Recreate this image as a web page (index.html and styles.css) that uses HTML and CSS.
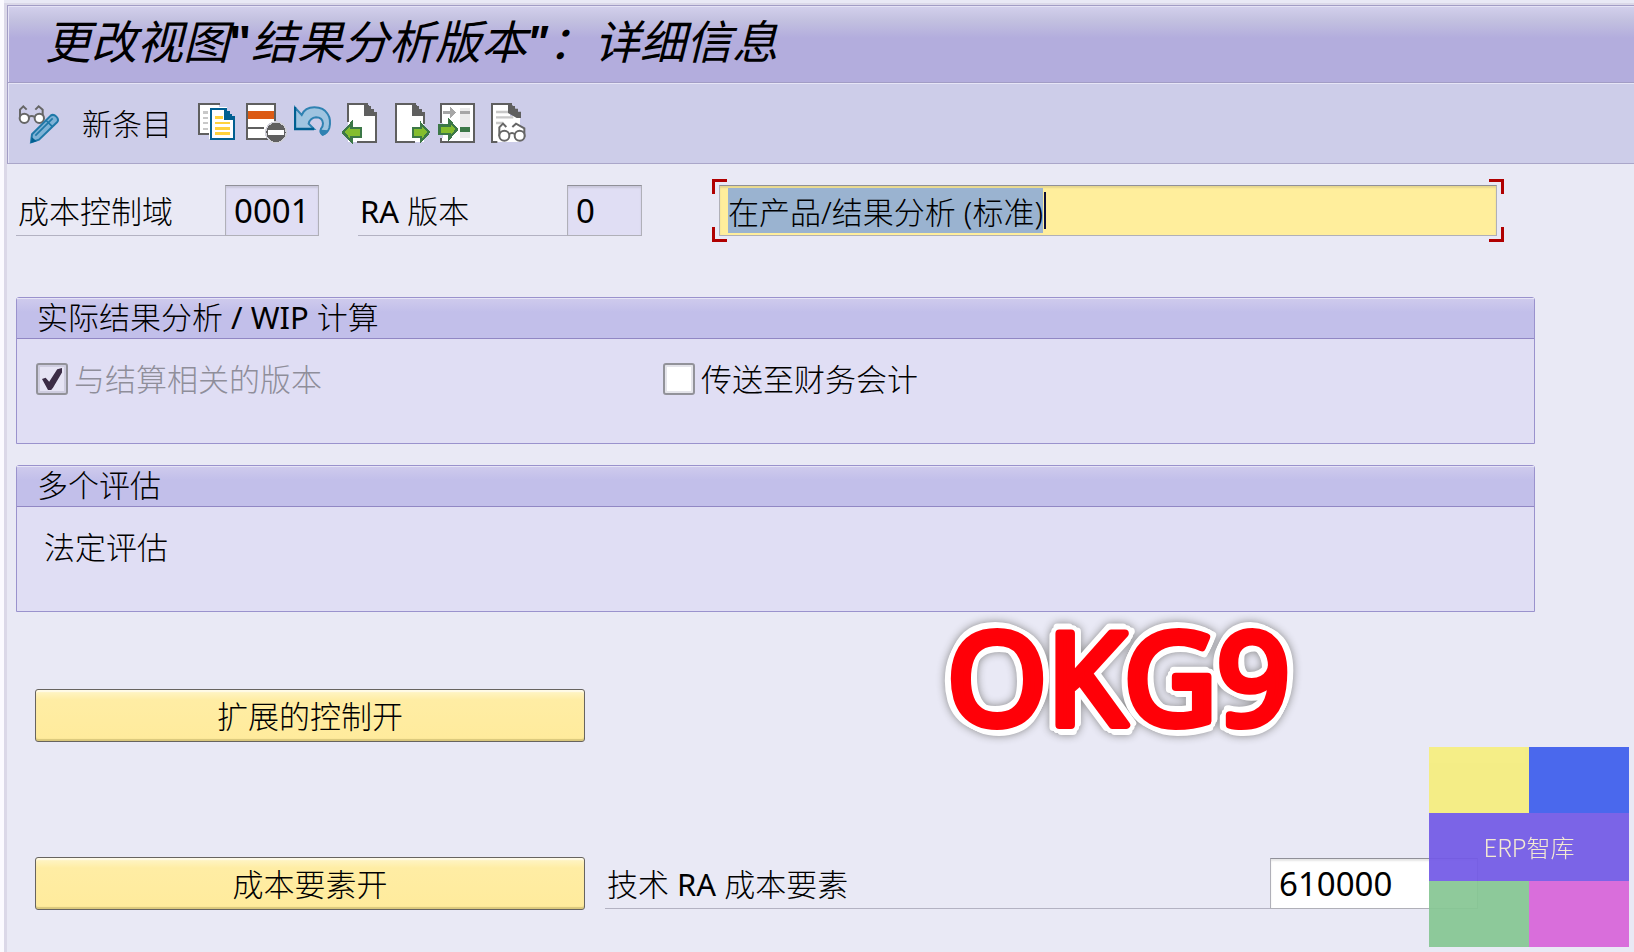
FILE: index.html
```html
<!DOCTYPE html>
<html lang="zh-CN">
<head>
    <meta charset="UTF-8">
    <meta name="viewport" content="width=device-width, initial-scale=1.0">
    <title>更改视图"结果分析版本"：详细信息</title>
    <link rel="stylesheet" href="styles.css">
</head>
<body>
    <div class="window">
        <header class="title-bar">
            <h1>更改视图<b class="open-quote">"</b>结果分析版本<b>"</b>：详细信息</h1>
        </header>

        <div class="toolbar">
            <button class="tool" aria-label="显示/更改">
                <svg viewBox="0 0 126 126">
                    <g fill="#fff" stroke="#666" stroke-width="6">
                        <path d="M6 40V20l10-10 10 10M52 20l10-10 12 10v20" fill="none"/>
                        <circle cx="19" cy="46" r="14"/>
                        <circle cx="64" cy="46" r="14"/>
                        <path d="M32 42q9-6 18 0" fill="none"/>
                    </g>
                    <path d="M39 118l3-24 56-56q8-6 17 3t2 17l-54 52z" fill="#7fb2d6" stroke="#1f78a8" stroke-width="6"/>
                    <path d="M52 98l52-52M83 51l20 20" fill="none" stroke="#1f78a8" stroke-width="5"/>
                    <path d="M39 120l2-18 15 13z" fill="#005f91"/>
                </svg>
            </button>
            <button class="tool-text">新条目</button>
            <button class="tool" aria-label="复制为">
                <svg viewBox="0 0 126 126" shape-rendering="crispEdges">
                    <path d="M3 3h60v89H3z" fill="#fff"/>
                    <path d="M66 3H3v90h33" fill="none" stroke="#5f5f5f" stroke-width="6"/>
                    <path d="M15 28h15M15 45h15M15 60h15M15 78h15" stroke="#c8c8c8" stroke-width="7"/>
                    <path d="M33 12h54v96H33z" fill="#fff"/>
                    <path d="M39 18h42v30h27v60H39z" fill="#fff" stroke="#005f91" stroke-width="6"/>
                    <path d="M78 15h9v9h8v8h8v8h8v11H78z" fill="#005f91"/>
                    <path d="M51 43h24M51 60h45M51 77h45M51 92h45" stroke="#ffd23c" stroke-width="8"/>
                </svg>
            </button>
            <button class="tool" aria-label="删除">
                <svg viewBox="0 0 126 126" shape-rendering="crispEdges">
                    <path d="M3 3h84v105H3z" fill="#fff" stroke="#5f5f5f" stroke-width="6"/>
                    <path d="M6 24h78v24H6z" fill="#dc5a14"/>
                    <path d="M6 75h48" stroke="#5f5f5f" stroke-width="7"/>
                    <circle cx="90" cy="88" r="33" fill="#cfcfd8"/>
                    <circle cx="90" cy="88" r="29" fill="#5f5f5f"/>
                    <path d="M67 81h46v14H67z" fill="#fff"/>
                </svg>
            </button>
            <button class="tool" aria-label="撤销">
                <svg viewBox="0 0 126 126">
                    <path d="M3 14v64h57L44 62q4-17 22-19 19 0 21 18 0 10-6 16-5 12 5 18 14-3 20-20 6-26-5-42-12-20-40-20-28 0-38 23z" fill="#9fc4e0" stroke="#2f82b2" stroke-width="6"/>
                    <path d="M3 12v66h57" fill="none" stroke="#005f91" stroke-width="7"/>
                    <path d="M81 80q-5 14 5 18 12-4 17-16z" fill="#2f82b2"/>
                </svg>
            </button>
            <button class="tool" aria-label="上一条目">
                <svg viewBox="0 0 126 126" shape-rendering="crispEdges">
                    <path d="M18 3h54v36h30v78H18z" fill="#fff"/>
                    <path d="M18 57V3h54l30 36v78H45" fill="none" stroke="#5f5f5f" stroke-width="6"/>
                    <path d="M66 0h12v9h9v8h9v9h9v13H66z" fill="#5f5f5f"/>
                    <path d="M3 88l25-27v14h29v26H28v14z" fill="#84bd2f" stroke="#3c7847" stroke-width="7"/>
                </svg>
            </button>
            <button class="tool" aria-label="下一条目">
                <svg viewBox="0 0 126 126" shape-rendering="crispEdges">
                    <path d="M18 3h54v36h30v78H18z" fill="#fff"/>
                    <path d="M75 117H18V3h54l30 36v24" fill="none" stroke="#5f5f5f" stroke-width="6"/>
                    <path d="M66 0h12v9h9v8h9v9h9v13H66z" fill="#5f5f5f"/>
                    <path d="M117 88L92 61v14H69v26h23v14z" fill="#84bd2f" stroke="#3c7847" stroke-width="7"/>
                </svg>
            </button>
            <button class="tool" aria-label="其他条目">
                <svg viewBox="0 0 126 126" shape-rendering="crispEdges">
                    <path d="M9 3h99v114H9z" fill="#fff" stroke="#5f5f5f" stroke-width="6"/>
                    <path d="M66 15h30v90H66z" fill="#ebebeb"/>
                    <path d="M15 23h21V11l18 17-18 18V33H15zM66 23h30v9H66z" fill="#a6a6a6"/>
                    <path d="M66 72h30v15H66z" fill="#3c7847"/>
                    <path d="M0 60h14v44H0z" fill="#cdcde9"/>
                    <path d="M57 79L34 53v14H4v25h30v14z" fill="#84bd2f" stroke="#3c7847" stroke-width="7"/>
                </svg>
            </button>
            <button class="tool" aria-label="打印字段内容">
                <svg viewBox="0 0 126 126">
                    <path d="M18 3h54v36h30v78H18z" fill="#fff"/>
                    <path d="M34 117H18V3h54l30 36" fill="none" stroke="#5f5f5f" stroke-width="6"/>
                    <path d="M66 0h12v9h9v8h9v9h9v19H92L66 30z" fill="#5f5f5f"/>
                    <path d="M30 27h36M30 43h52M30 60h22" stroke="#c8c8c8" stroke-width="7"/>
                    <g fill="#fff" stroke="#666" stroke-width="6">
                        <path d="M40 100V73l11-11 10 10M79 72l11-10 25 14v26"/>
                        <circle cx="55" cy="98" r="15"/>
                        <circle cx="101" cy="98" r="15"/>
                        <path d="M69 94q9-8 18 0" fill="none"/>
                    </g>
                </svg>
            </button>
        </div>

        <main class="content">
            <div class="key-row">
                <label class="field-label key-label" for="area">成本控制域</label>
                <input class="field area" id="area" value="0001" readonly>
                <label class="field-label key-label version-label" for="version"><span class="latin">RA </span>版本</label>
                <input class="field version" id="version" value="0" readonly>
                <div class="focus-frame">
                    <input class="field description" id="description" aria-label="描述" value="在产品/结果分析 (标准)">
                    <span class="caret"></span>
                    <span class="corner top left"></span>
                    <span class="corner top right"></span>
                    <span class="corner bottom left"></span>
                    <span class="corner bottom right"></span>
                </div>
            </div>

            <section class="group">
                <h2>实际结果分析<span class="latin"> / WIP </span>计算</h2>
                <div class="group-body checks">
                    <label class="check disabled"><input type="checkbox" checked disabled>与结算相关的版本</label>
                    <label class="check"><input type="checkbox">传送至财务会计</label>
                </div>
            </section>

            <section class="group">
                <h2>多个评估</h2>
                <div class="group-body">
                    <p>法定评估</p>
                </div>
            </section>

            <div class="actions">
                <button class="push">扩展的控制开</button>
                <div class="action-row">
                    <button class="push">成本要素开</button>
                    <label class="field-label" for="element">技术<span class="latin"> RA </span>成本要素</label>
                    <input class="field element" id="element" value="610000">
                </div>
            </div>
        </main>
    </div>

    <svg class="stamp" width="380" height="220">
        <text x="17" y="157">OKG9</text>
    </svg>

    <div class="watermark">
        <span class="yellow"></span>
        <span class="blue"></span>
        <span class="name">ERP智库</span>
        <span class="green"></span>
        <span class="pink"></span>
    </div>

    <script>
        // Start with the description selected
        const description = document.getElementById('description');
        description.focus();
        description.select();
    </script>
</body>
</html>
```
FILE: styles.css
```css
* {
    box-sizing: border-box;
}
body {
    position: relative;
    margin: 0;
    min-height: 100vh;
    padding: 3px 0 0 4px;
    overflow: hidden;
    background: linear-gradient(to right, #fbfaff 4px, #e9e9f5 4px);
    font-family: "Noto Sans", "Noto Sans CJK SC", sans-serif;
    font-size: 31px;
    font-weight: 300;
    line-height: 38px;
    color: #000;
}
h1, h2, p {
    margin: 0;
    font-weight: inherit;
}
button, input {
    font: inherit;
    color: inherit;
}
.latin {
    font-weight: 400;
}
.window {
    min-height: calc(100vh - 3px);
    border-top: 2px solid #dbd8e8;
    border-left: 3px solid #dbd8e8;
}

/* Title and toolbar */
.title-bar {
    height: 78px;
    padding: 5px 37px;
    border: 1px solid #a29dc5;
    border-right: none;
    box-shadow: inset 1px 1px 0 #e6e3f6;
    background: linear-gradient(#d3d0ec, #c3c1e0 14px, #b3addd 32px);
}
.title-bar h1 {
    font-size: 46px;
    font-weight: 400;
    line-height: 60px;
    font-style: italic;
    white-space: nowrap;
}
.open-quote {
    font-style: normal;
}
.toolbar {
    display: flex;
    align-items: center;
    gap: 6px;
    height: 81px;
    padding: 2px 10px 0;
    border-left: 1px solid #a29dc5;
    border-bottom: 1px solid #aaa6c9;
    box-shadow: inset 1px 1px 0 #e6e5f6;
    background: #cdcde9;
}
.tool, .tool-text {
    padding: 0;
    border: none;
    background: none;
}
.tool svg {
    display: block;
    width: 42px;
    height: 42px;
}
.tool-text {
    margin: 0 20px 0 16px;
    font-size: 30px;
}

/* Fields */
.content {
    padding: 21px 99px 20px 9px;
}
.key-row, .action-row {
    display: flex;
}
.field-label {
    height: 51px;
    padding: 7px 2px 0;
    border-bottom: 1px solid #b3b2c2;
}
.key-label {
    width: 209px;
}
.version-label {
    margin-left: 39px;
}
.field {
    height: 51px;
    padding: 0 8px;
    border: 1px solid #b0b0b8;
    border-top-color: #909098;
    border-radius: 0;
    outline: none;
    box-shadow: inset 0 2px 2px rgba(0, 0, 0, 0.1);
    background: #fff;
    font-size: 33px;
    font-weight: 400;
}
.area, .version {
    background: #e0def4;
}
.area {
    width: 94px;
}
.version {
    width: 75px;
}
.focus-frame {
    position: relative;
    flex: 1;
    margin: 0 38px 0 77px;
}
.description {
    display: block;
    width: 100%;
    background: #ffee9c;
    font-size: 31px;
    font-weight: 300;
}
.description::selection {
    background: #9ab3d0;
    color: #000;
}
.caret {
    position: absolute;
    top: 7px;
    left: 325px;
    width: 2px;
    height: 37px;
    background: #101038;
}
.corner {
    position: absolute;
    width: 15px;
    height: 15px;
    border: 0 solid #b00000;
}
.corner.top {
    top: -6px;
    border-top-width: 3px;
}
.corner.bottom {
    bottom: -6px;
    border-bottom-width: 3px;
}
.corner.left {
    left: -7px;
    border-left-width: 3px;
}
.corner.right {
    right: -7px;
    border-right-width: 3px;
}

/* Groups */
.group {
    height: 147px;
    margin-top: 21px;
    border: 1px solid #9a92cd;
    border-radius: 3px 3px 0 0;
    background: #e0def4;
}
.key-row + .group {
    margin-top: 61px;
}
.group h2 {
    height: 41px;
    padding-left: 20px;
    border-bottom: 1px solid #9187c4;
    box-shadow: inset 0 1px 0 #e6e4f6;
    background: linear-gradient(#cfcbed, #c2bfea 14px);
    font-size: 31px;
    line-height: 38px;
}
.group-body {
    padding: 21px 19px;
}
.group-body p {
    padding-left: 8px;
}
.checks {
    display: grid;
    grid-template-columns: 627px 1fr;
}
.check {
    display: flex;
    align-items: center;
    gap: 6px;
}
.check.disabled {
    color: #8f8e9a;
}
.check input {
    appearance: none;
    width: 32px;
    height: 32px;
    margin: 0;
    border: 2px solid #929299;
    border-radius: 3px;
    box-shadow: inset 0 0 0 2px #e4e4ea;
    background: #fff;
}
.check input:disabled {
    box-shadow: inset 0 0 0 2px #cfcde0;
    background: #e6e4f4;
}
.check input:checked::before {
    content: "";
    display: block;
    width: 20px;
    height: 22px;
    margin: 3px 4px;
    background: #3c2d46;
    clip-path: polygon(0 50%, 18% 44%, 36% 62%, 76% 6%, 100% 0, 100% 20%, 55% 90%, 46% 100%, 30% 100%);
}

/* Push buttons */
.actions {
    padding: 77px 57px 0 19px;
}
.push {
    display: block;
    width: 550px;
    height: 53px;
    padding: 0;
    border: 1px solid #67645f;
    border-radius: 3px;
    box-shadow: inset 0 -2px 1px #d9c77c, inset 0 2px 1px #fffbe8;
    background: linear-gradient(#fff6cb, #ffeda4 10px, #ffeb9c);
}
.action-row {
    margin-top: 115px;
}
.action-row .push {
    margin-right: 20px;
}
.action-row .field-label {
    flex: 1;
    margin-top: 1px;
}
.element {
    width: 208px;
    margin-top: 1px;
}

/* Overlays */
.stamp {
    position: absolute;
    top: 568px;
    left: 930px;
    filter: drop-shadow(4px 2px #fff) drop-shadow(-4px -2px #fff) drop-shadow(2px -4px #fff) drop-shadow(-2px 4px #fff) drop-shadow(0 0 4px #888);
}
.stamp text {
    font-size: 128px;
    font-weight: 400;
    fill: #ff0008;
    stroke: #ff0008;
    stroke-width: 8px;
    stroke-linejoin: round;
}
.watermark {
    position: absolute;
    right: 5px;
    bottom: 5px;
    display: grid;
    grid-template: 66px 68px 66px / 100px 100px;
    opacity: 0.93;
}
.yellow {
    background: #f5ee7e;
}
.blue {
    background: #3e5fed;
}
.name {
    grid-column: span 2;
    background: #735ae7;
    color: #f4ead0;
    font-family: "Noto Sans CJK SC", sans-serif;
    font-size: 24px;
    line-height: 68px;
    text-align: center;
}
.green {
    background: #87c794;
}
.pink {
    background: #d865da;
}
```
